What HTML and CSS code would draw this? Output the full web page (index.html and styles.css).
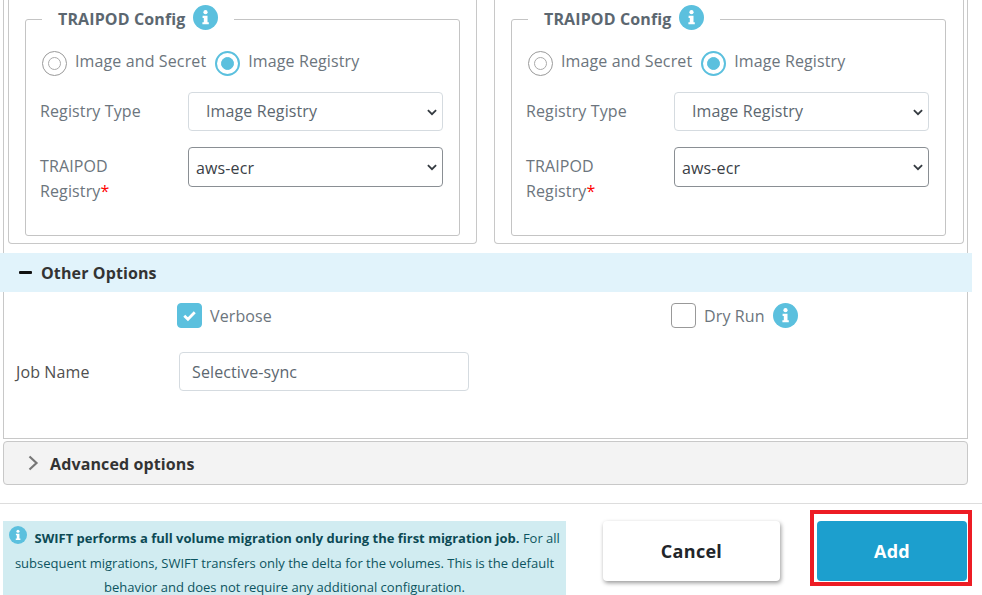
FILE: index.html
```html
<!DOCTYPE html>
<html lang="en">
<head>
    <meta charset="UTF-8">
    <title>Add Job</title>
    <meta name="viewport" content="width=device-width, initial-scale=1">
    <link rel="stylesheet" href="styles.css">
</head>
<body>
<svg class="defs" width="0" height="0" aria-hidden="true">
    <symbol id="info" viewBox="0 0 25 25">
        <circle cx="12.5" cy="12.5" r="12.5" fill="#5bc0de"/>
        <circle cx="12.5" cy="7.2" r="2.1" fill="#fff"/>
        <path d="M9.6 10.8h4.9v6.4h1.3v2.1H9.4v-2.1h1.4v-4.3H9.6z" fill="#fff"/>
    </symbol>
    <symbol id="chev" viewBox="0 0 10 7">
        <path d="M.9 1.2 5 5.2l4.1-4" fill="none" stroke="#343a40" stroke-width="1.8"/>
    </symbol>
</svg>
<div class="page">
    <div class="card">
        <div class="panels">
            <div class="panel">
                <fieldset class="config">
                    <legend>TRAIPOD Config <svg class="info"><use href="#info"/></svg></legend>
                    <div class="radios">
                        <label class="radio"><span class="dot"></span>Image and Secret</label>
                        <label class="radio on"><span class="dot"></span>Image Registry</label>
                    </div>
                    <div class="row">
                        <label class="lbl">Registry Type</label>
                        <div class="sel">
                            <select class="type"><option>Image Registry</option></select>
                            <svg class="arrow"><use href="#chev"/></svg>
                        </div>
                    </div>
                    <div class="row row-reg">
                        <label class="lbl">TRAIPOD Registry<span class="req">*</span></label>
                        <div class="sel">
                            <select class="reg"><option>aws-ecr</option></select>
                            <svg class="arrow"><use href="#chev"/></svg>
                        </div>
                    </div>
                </fieldset>
            </div>
            <div class="panel">
                <fieldset class="config">
                    <legend>TRAIPOD Config <svg class="info"><use href="#info"/></svg></legend>
                    <div class="radios">
                        <label class="radio"><span class="dot"></span>Image and Secret</label>
                        <label class="radio on"><span class="dot"></span>Image Registry</label>
                    </div>
                    <div class="row">
                        <label class="lbl">Registry Type</label>
                        <div class="sel">
                            <select class="type"><option>Image Registry</option></select>
                            <svg class="arrow"><use href="#chev"/></svg>
                        </div>
                    </div>
                    <div class="row row-reg">
                        <label class="lbl">TRAIPOD Registry<span class="req">*</span></label>
                        <div class="sel">
                            <select class="reg"><option>aws-ecr</option></select>
                            <svg class="arrow"><use href="#chev"/></svg>
                        </div>
                    </div>
                </fieldset>
            </div>
        </div>

        <div class="bar"><span class="minus"></span>Other Options</div>

        <div class="checks">
            <label class="check on">
                <span class="box"><svg viewBox="0 0 25 25"><path d="M6.8 12.8l4 3.8 7.4-7.6" fill="none" stroke="#fff" stroke-width="3"/></svg></span>Verbose
            </label>
            <label class="check">
                <span class="box"></span>Dry Run <svg class="info"><use href="#info"/></svg>
            </label>
        </div>

        <div class="job">
            <label class="job-lbl">Job Name</label>
            <input class="job-in" type="text" value="Selective-sync">
        </div>
    </div>

    <div class="advanced">
        <svg class="adv-arrow" viewBox="0 0 11 16"><path d="M1.5 1.5 8.5 8l-7 6.5" fill="none" stroke="#777" stroke-width="2.2"/></svg>
        Advanced options
    </div>

    <hr class="sep">

    <div class="foot">
        <div class="note">
            <svg class="note-icon"><use href="#info"/></svg>
            <b>SWIFT performs a full volume migration only during the first migration job.</b> For all subsequent migrations, SWIFT transfers only the delta for the volumes. This is the default behavior and does not require any additional configuration.
        </div>
        <button class="btn cancel" type="button">Cancel</button>
        <div class="add-wrap">
            <button class="btn add" type="button">Add</button>
            <div class="frame"></div>
        </div>
    </div>
</div>
</body>
</html>
```

FILE: styles.css
```css
html, body { margin: 0; padding: 0; height: 595px; overflow: hidden; background: #fff;}
body { font-family: "Open Sans", sans-serif; font-size: 16px; letter-spacing: .12px; color: #6c757d;}
.defs { position: absolute;}
.page { margin-top: -20px; padding-left: 3px; width: 965px;}
.card { height: 459px; border: 1px solid #c8c8c8; border-top: none; box-sizing: border-box;}

.panels { display: flex; gap: 17px; padding-left: 4px;}
.panel { flex: none; width: 469px; height: 264px; box-sizing: border-box; border: 1px solid #c8c8c8; border-top: none; border-radius: 0 0 4px 4px; padding: 25px 0 0 16px;}
.panel + .panel { width: 470px;}

.config { margin: 0; width: 435px; height: 231px; box-sizing: border-box; border: 1px solid #c4c4c4; border-radius: 3px; padding: 0 16px 0 14px;}
.config legend { display: flex; align-items: center; height: 28px; margin-left: 2px; padding: 0 16px; font-weight: 700; color: #5c6770; white-space: nowrap;}
.info { width: 25px; height: 25px; flex: none;}
legend .info { margin: -3px 0 0 8px;}

.radios { display: flex; gap: 9px; margin-top: 17px; padding-left: 2px; height: 25px;}
.radio { display: flex; align-items: center; white-space: nowrap; margin-top: -4px;}
.dot { width: 25px; height: 25px; box-sizing: border-box; border: 1px solid #9a9a9a; border-radius: 50%; margin: 6px 8px 0 0; display: flex; align-items: center; justify-content: center;}
.dot::after { content: ""; width: 13px; height: 13px; box-sizing: border-box; border: 1px solid #aaa; border-radius: 50%;}
.radio.on .dot { border: 2px solid #5bc0de;}
.radio.on .dot::after { background: #5bc0de; border-color: #5bc0de;}

.row { display: grid; grid-template-columns: 148px 255px; align-items: center; margin-top: 16px;}
.radios + .row { margin-top: 17px;}
.lbl { line-height: 25px;}
.row-reg { align-items: start;}
.row-reg .lbl { padding: 7px 30px 0 0;}
.req { color: #f00;}
.sel { position: relative;}
.sel select { display: block; width: 100%; appearance: none; background: #fff; font-family: inherit; font-size: 16px; letter-spacing: inherit; border-radius: 4px; box-sizing: border-box; outline: none; margin: 0;}
.type { height: 39px; padding: 0 30px 2px 17px; border: 1px solid #d5dbe0; color: #5c6770;}
.reg { height: 40px; padding: 2px 30px 0 7px; border: 1px solid #8a8f94; color: #3a4046;}
.arrow { position: absolute; right: 6px; top: 17px; width: 10px; height: 7px; pointer-events: none;}

.bar { display: flex; align-items: center; height: 39px; margin: 9px -5px 0 -4px; padding-left: 19px; background: #e1f3fb; color: #333; font-weight: 700;}
.minus { width: 13px; height: 3px; background: #111; border-radius: 1px; margin-right: 9px;}

.checks { display: flex; margin-top: 11px; height: 25px;}
.check { display: flex; align-items: center; white-space: nowrap;}
.check:first-child { margin-left: 173px; width: 494px;}
.box { width: 25px; height: 25px; box-sizing: border-box; border: 1px solid #999; border-radius: 4px; margin-right: 8px;}
.check.on .box { background: #5bc0de; border-color: #5bc0de;}
.box svg { display: block; width: 23px; height: 23px;}
.check .info { margin-left: 8px;}

.job { display: flex; align-items: center; margin-top: 24px; padding-left: 12px;}
.job-lbl { width: 163px; color: #4f4f4f;}
.job-in { width: 290px; height: 39px; box-sizing: border-box; border: 1px solid #d5dbe0; border-radius: 4px; padding: 0 12px; font-family: inherit; font-size: 16px; letter-spacing: inherit; color: #5c6770; outline: none;}

.advanced { display: flex; align-items: center; height: 44px; box-sizing: border-box; margin-top: 2px; padding: 2px 0 0 24px; background: #f3f3f3; border: 1px solid #c8c8c8; border-radius: 4px; color: #333; font-weight: 700;}
.adv-arrow { width: 11px; height: 16px; margin: -2px 11px 0 0;}

.sep { border: none; border-top: 1px solid #ddd; margin: 18px 0 0 -3px; width: 982px;}

.foot { display: flex; align-items: flex-start; gap: 37px; margin-top: 17px;}
.note { width: 563px; height: 90px; flex: none; background: #d1ecf1; color: #0c5460; font-size: 13px; letter-spacing: 0; line-height: 24.5px; text-align: center; padding: 5px 4px 0; box-sizing: border-box;}
.note-icon { width: 18px; height: 18px; vertical-align: top; margin-right: 4px;}
.note b { color: #0c4a55;}
.btn { display: block; height: 60px; border: none; border-radius: 4px; font-family: inherit; font-size: 18px; letter-spacing: .3px; font-weight: 700;}
.cancel { width: 177px; background: #fff; color: #212529; box-shadow: 1px 2px 4px #999;}
.add-wrap { position: relative;}
.add { width: 150px; background: #1c9fce; color: #fff;}
.frame { position: absolute; left: -7px; top: -11px; right: -5px; bottom: -5px; border: 4px solid #ed1c24;}
```
